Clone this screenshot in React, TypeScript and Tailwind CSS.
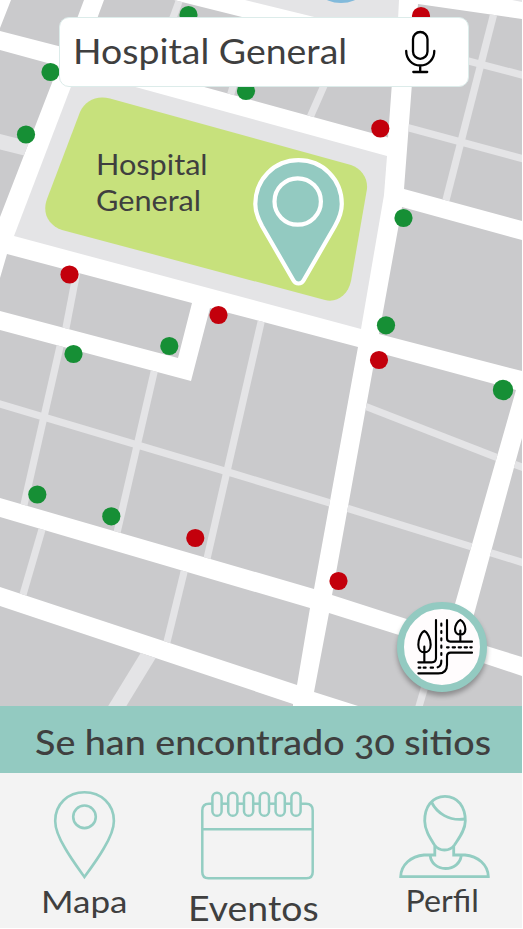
import React from "react";

const BLOCKS = [
  "M11 0H84L66 48L0 31V28Z",
  "M0 50L58.5 66L0 217Z",
  "M104 0H174L394 55L388 137.5L84 54Z",
  "M418 4L522 19V221L404 189Z",
  "M402 207L522 240V371L379 334Z",
  "M7 254L192 303L178 358L0 311V278Z",
  "M0 330L191 381L210 308L358 347L314 589L0 498Z",
  "M376 352L516 390L447 632L332 595Z",
  "M522 438V657L467 640Z",
  "M0 517L310 608L297 685L0 587Z",
  "M0 606L293 704V706H0Z",
  "M329 613L399 635L522 676V706H358L314 692Z",
].join(" ");

const LANES = [
  "M181 -4L170 26",
  "M235 80L229 100",
  "M326 81L308 122",
  "M495 9L445 204",
  "M455 57.5L524 75.5",
  "M400 125.5L524 159",
  "M77.5 268L65 333",
  "M61 342L23 509",
  "M155 368L116 537",
  "M262 318L206 563",
  "M-2 403.5L233 473.5L340 506L524 563",
  "M362 405L524 468",
  "M43 526L22 598",
  "M185 568L166 646",
  "M437 645L418 710",
];

const SITES: [number, number, boolean, number?][] = [
  [188.5, 15, true],
  [50.5, 72, true],
  [26, 134.5, true],
  [246, 91, true],
  [403.5, 218, true],
  [386, 325.3, true],
  [503, 390, true, 10.2],
  [169.3, 346, true],
  [73.5, 354, true],
  [37.3, 494.5, true],
  [111.3, 516.3, true],
  [421, 16, false],
  [380.3, 128.5, false],
  [69.5, 274.5, false],
  [218.5, 315, false],
  [379, 360, false],
  [195.3, 538, false],
  [338.5, 581, false],
];

function CityMap() {
  return (
    <svg className="block h-full w-full" viewBox="0 0 522 706">
      <defs>
        <clipPath id="blocks">
          <path d={BLOCKS} />
        </clipPath>
      </defs>
      <rect width="522" height="706" fill="#fff" />
      <path d={BLOCKS} fill="#cacacc" />
      <g clipPath="url(#blocks)" stroke="#e4e4e6" strokeWidth="7.2" fill="none">
        {LANES.map((d) => (
          <path key={d} d={d} />
        ))}
        <path d="M-5 140.5L35 150.5" strokeWidth="15" />
        <path d="M154 646L113 713" strokeWidth="15.5" />
      </g>
      <path d="M245 0H399L396 60V37Z M512 0H522V2Z" fill="#e4e4e6" />
      <circle cx="341" cy="-31" r="34" fill="#82badb" />
      <path d="M77 71L387 156L384 195L361 329L14 236Z" fill="#e4e4e6" />
      <path
        d="M110 98.5L351 165C362 169 368.500 179 366.800 190L351 281C348 295 337 303 325 300L62 230C48 225 42 213 47 199L80 112C85 101 96 95 110 98.500Z"
        fill="#c7e17c"
      />
      <path
        d="M298.500 160.200C274 160.200 255.300 179.500 255.300 204C255.300 213 258.500 219.500 262 226L293.500 280.500C295.800 284.500 301.200 284.500 303.500 280.500L335 226C338.700 219.500 341.800 213 341.800 204C341.800 179.500 323 160.200 298.500 160.200Z"
        fill="#93cac1"
        stroke="#fff"
        strokeWidth="4.2"
      />
      <circle cx="297.700" cy="201.500" r="23.200" fill="none" stroke="#fff" strokeWidth="4.2" />
      {SITES.map(([x, y, open, r]) => (
        <circle key={`${x}-${y}`} cx={x} cy={y} r={r ?? 9.1} fill={open ? "#168f35" : "#c3000c"} />
      ))}
    </svg>
  );
}

function MicIcon() {
  return (
    <svg className="h-[44px] w-[32px]" viewBox="404 29 32 44" fill="none" stroke="#000" strokeWidth="2.3" strokeLinecap="round">
      <rect x="413" y="31" width="14.500" height="26.800" rx="7.250" />
      <path d="M406.200 50C406.200 58 412 64.500 420.200 64.500C428.500 64.500 434.300 58 434.300 50M420.200 64.500V71M413.300 71H427.200" />
    </svg>
  );
}

function RoutesIcon() {
  return (
    <svg className="h-full w-full" viewBox="42 42 228 228" fill="none" stroke="#000" strokeWidth="6.400" strokeLinecap="round">
      <path d="M138 75V189Q138 202 125 202H85" />
      <path d="M171 75V130Q171 140 181 140H246" />
      <path d="M246 173H182Q171 173 171 184V209Q171 235 145 235H85" />
      <path d="M154 86V92M154 108V114M154 130V136M154 152V158M154 174V180M154 197Q154 213 143 217M129 218H122M107 218H101M91 218H86" />
      <path d="M171 157H176M188 157H195M206 157H213M224 157H231M241 157H245" />
      <path d="M103 108C93 112 85 132 85 149C85 163 92 172 103 172C114 172 122 163 122 149C122 132 113 112 103 108ZM103 155V200" />
      <path d="M211 75C203 78 195 91 195 103C195 113 202 119 211 119C220 119 226 113 226 103C226 91 219 78 211 75ZM211 107V138" />
    </svg>
  );
}

function PinIcon() {
  return (
    <svg className="h-[92px] w-[66px]" viewBox="51 789 66 92" fill="none" stroke="#93cdc2" strokeWidth="2.600">
      <path d="M84.400 877C78 868 70 857 65 848C59 838 55.200 830 55.200 821C55.200 804 68 792.300 84.400 792.300C101 792.300 113.900 804 113.900 821C113.900 830 110 838 104 848C99 857 91 868 84.400 877Z" />
      <circle cx="84.500" cy="816.800" r="11.300" />
    </svg>
  );
}

function CalendarIcon() {
  return (
    <svg className="h-[92px] w-[116px]" viewBox="199 790 116 92" fill="none" stroke="#93cdc2" strokeWidth="2.500">
      <path d="M212.400 803.700H209Q202.300 803.700 202.300 810.500V872Q202.300 878.300 208.500 878.300H306.500Q312.700 878.300 312.700 872V810.500Q312.700 803.700 306 803.700H300.600M202.300 829.300H312.700" />
      {[217, 232.8, 248.6, 264.4, 280.2, 296].map((x, i) => (
        <g key={x}>
          <rect x={x - 4.6} y="792.800" width="9.200" height="23" rx="4.600" />
          {i < 5 && <path d={`M${x + 4.6} 803.700h6.600`} />}
        </g>
      ))}
    </svg>
  );
}

function PersonIcon() {
  return (
    <svg className="h-[88px] w-[94px]" viewBox="397 792 94 88" fill="none" stroke="#93cdc2" strokeWidth="2.800">
      <path d="M445 796.400C432 796.400 424.700 807 424.700 821C424.700 830 430 838 434.500 845C437 848.500 440 850 444.500 850C449 850 452 848.500 454.500 845C459 838 465.300 830 465.300 821C465.300 807 458 796.400 445 796.400Z" />
      <path d="M431.700 802.500C437 813 449 821.500 465 819" />
      <path d="M434.800 846V855H424C411 856 401 865 400.700 876.600H488.300C488 865 478 856 465 855H453.700V846" />
      <path d="M430.200 855.500C431 863 437 868.500 445.500 868.500C454 868.500 460.500 863 461.200 855.500" />
    </svg>
  );
}

export default function App() {
  return (
    <div className="h-[929px] w-[523px] overflow-hidden bg-white font-['Lato',sans-serif] text-[#3f3f3f]">
      <main className="flex h-[928px] w-[522px] flex-col bg-[#f3f3f3]">
        <section className="relative h-[706px] shrink-0">
          <CityMap />
          <div className="absolute left-[59px] top-[17px] flex h-[70px] w-[410px] items-center justify-between rounded-[10px] border border-[#dcecea] bg-white pl-[13px] pr-[32px]">
            <span className="mb-[2px] origin-left scale-x-[1.085] whitespace-nowrap text-[34.500px] leading-[40px]">Hospital General</span>
            <MicIcon />
          </div>
          <p className="absolute left-[96px] top-[146px] origin-left scale-x-[1.095] text-[28px] leading-[36px]">
            Hospital
            <br />
            General
          </p>
          <button className="absolute left-[397px] top-[602px] size-[90px] rounded-full border-[7px] border-[#93cac1] bg-[#fffcfd] shadow-[0_4px_5px_rgba(0,0,0,0.3)]">
            <RoutesIcon />
          </button>
        </section>
        <section className="flex h-[67px] shrink-0 items-center bg-[#93cac1] pl-[35px] pt-[5px]">
          <h1 className="origin-left scale-x-[1.107] whitespace-nowrap text-[34px] font-medium leading-[40px] oldstyle-nums">Se han encontrado 30 sitios</h1>
        </section>
        <nav className="flex h-[155px] shrink-0 items-start pl-[34px]">
          <a className="flex w-[100px] flex-col items-center pt-[16px]">
            <PinIcon />
            <span className="mt-[2px] scale-x-[1.13] text-[31px] leading-[36px]">Mapa</span>
          </a>
          <a className="ml-[57px] flex w-[131px] flex-col items-center pt-[17px]">
            <CalendarIcon />
            <span className="mr-[6px] mt-[6px] scale-x-[1.1] text-[34px] leading-[40px]">Eventos</span>
          </a>
          <a className="ml-[72px] flex w-[100px] flex-col items-center pt-[19px]">
            <PersonIcon />
            <span className="mr-[4px] mt-[2px] scale-x-[1.04] text-[31px] leading-[36px]">Perfil</span>
          </a>
        </nav>
      </main>
    </div>
  );
}
